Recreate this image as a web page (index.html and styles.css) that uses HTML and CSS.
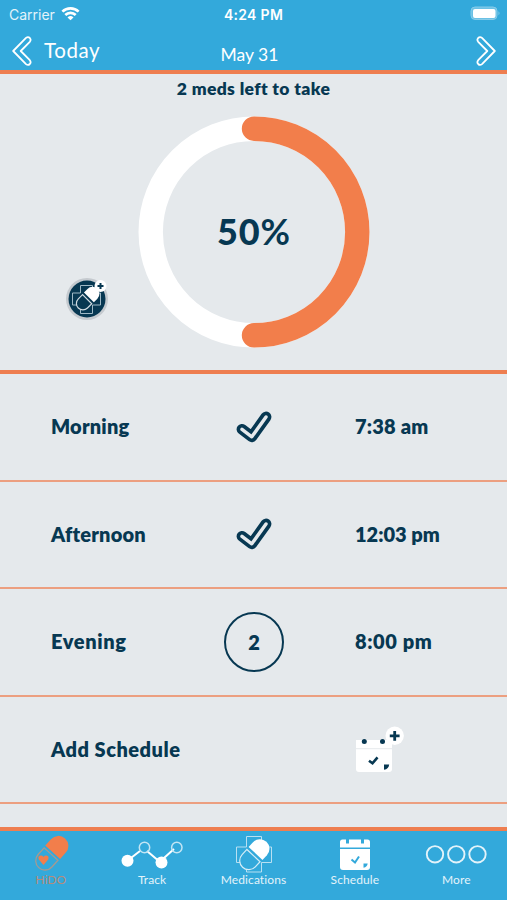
FILE: index.html
```html
<!DOCTYPE html>
<html lang="en">
<head>
    <meta charset="UTF-8">
    <meta name="viewport" content="width=device-width, initial-scale=1.0">
    <title>HiDO</title>
    <link rel="stylesheet" href="styles.css">
</head>
<body>
    <header class="header">
        <div class="status-bar">
            <div class="carrier">
                <span class="carrier-text">Carrier</span>
                <svg class="wifi" width="19" height="15" viewBox="0 0 19 15" fill="none" stroke="#fff" stroke-width="2.7">
                    <path d="M1.4 5.6a11.6 11.6 0 0 1 16.2 0"/>
                    <path d="M4.3 9a7.4 7.4 0 0 1 10.4 0"/>
                    <path d="M9.5 14.3L6.5 11.4a4.3 4.3 0 0 1 6 0z" fill="#fff" stroke="none"/>
                </svg>
            </div>
            <span class="clock">4:24 PM</span>
            <svg class="battery" width="31" height="15" viewBox="0 0 31 15">
                <rect x="1" y="1" width="26" height="12.5" rx="4" fill="#6bc1e5" stroke="#87cce9"/>
                <rect x="3" y="3" width="22.5" height="9" rx="2" fill="#fff"/>
                <path d="M28.5 5.2q2 2 0 4z" fill="#87cce9"/>
            </svg>
        </div>
        <nav class="day-nav">
            <a class="today">
                <svg width="20" height="30" viewBox="0 0 20 30" fill="none" stroke="#fff" stroke-width="1.8" stroke-linejoin="round">
                    <path d="M1.2 15L14 1.9q2.1-1.6 3.8.1q1.6 1.8 0 3.8L8.7 15l9.1 9.2q1.6 2 0 3.8q-1.7 1.7-3.8.1z"/>
                </svg>
                <span class="today-text">Today</span>
            </a>
            <span class="date">May 31</span>
            <svg class="next" width="20" height="30" viewBox="0 0 20 30" fill="none" stroke="#fff" stroke-width="1.8" stroke-linejoin="round">
                <path d="M18.8 15L6 1.9q-2.1-1.6-3.8.1q-1.6 1.8 0 3.8L11.3 15l-9.1 9.2q-1.6 2 0 3.8q1.7 1.7 3.8.1z"/>
            </svg>
        </nav>
    </header>

    <section class="progress">
        <h1 class="progress-title">2 meds left to take</h1>
        <div class="ring">
            <svg width="232" height="232" viewBox="0 0 232 232" fill="none" stroke-width="24.4">
                <circle cx="116" cy="116" r="103.3" stroke="#fff"/>
                <path d="M116 12.7a103.3 103.3 0 0 1 0 206.6" stroke="#f27e4b" stroke-linecap="round"/>
            </svg>
            <span class="percent">50<span class="sign">%</span></span>
        </div>
        <!-- add medication button -->
        <svg class="add-med" width="46" height="46" viewBox="0 0 46 46">
            <circle cx="23" cy="23" r="21" fill="#c5cacf"/>
            <circle cx="23" cy="23" r="18.5" fill="#073852"/>
            <path d="M16.5 9.5h12v7.5h8v12h-8v8.5h-12V29h-8V17h8z" fill="none" stroke="#9fb9c6" stroke-width="1"/>
            <g transform="translate(23.5 22.8) rotate(45)">
                <path d="M-7-2V-7a7 7 0 0 1 14 0v5z" fill="#fff"/>
                <path d="M-6.5 .5V6.5a6.5 6.5 0 0 0 13 0v-6z" fill="#073852" stroke="#d0dbe1" stroke-width="1.2"/>
            </g>
            <circle cx="36.5" cy="10" r="6" fill="#fff"/>
            <path d="M36.5 7v6M33.5 10h6" stroke="#073852" stroke-width="2"/>
        </svg>
    </section>

    <main class="schedule">
        <div class="row">
            <span class="label">Morning</span>
            <svg class="check" width="36" height="32" viewBox="0 0 36 32" fill="none" stroke-linecap="round" stroke-linejoin="round">
                <path d="M6 18.3L15.8 25.8L30 6" stroke="#073852" stroke-width="10.8"/>
                <path d="M6 18.3L15.8 25.8L30 6" stroke="#e5e9ec" stroke-width="3.4"/>
            </svg>
            <span class="time">7:38 am</span>
        </div>
        <div class="row">
            <span class="label">Afternoon</span>
            <svg class="check" width="36" height="32" viewBox="0 0 36 32" fill="none" stroke-linecap="round" stroke-linejoin="round">
                <path d="M6 18.3L15.8 25.8L30 6" stroke="#073852" stroke-width="10.8"/>
                <path d="M6 18.3L15.8 25.8L30 6" stroke="#e5e9ec" stroke-width="3.4"/>
            </svg>
            <span class="time noon-time">12:03 pm</span>
        </div>
        <div class="row">
            <span class="label evening">Evening</span>
            <span class="count">2</span>
            <span class="time evening-time">8:00 pm</span>
        </div>
        <div class="row">
            <span class="label add">Add Schedule</span>
            <svg class="add-schedule" width="50" height="48" viewBox="0 0 50 48">
                <path d="M1 14h36v29a3 3 0 0 1-3 3H4a3 3 0 0 1-3-3z" fill="#fff"/>
                <path d="M1 22.7h36" stroke="#e5e9ec"/>
                <circle cx="9.3" cy="15.5" r="2.5" fill="#073852"/>
                <circle cx="27.5" cy="15.5" r="2.5" fill="#073852"/>
                <path d="M14 34.7l3.5 2.6l5-6" fill="none" stroke="#073852" stroke-width="2.6"/>
                <path d="M29 38.5h5.2q-.4 4.4-5.2 5.3z" fill="#073852"/>
                <circle cx="39.7" cy="9.8" r="9.2" fill="#fff"/>
                <path d="M39.7 4.9v9.8M34.8 9.8h9.8" stroke="#073852" stroke-width="2.8"/>
            </svg>
        </div>
    </main>

    <nav class="tab-bar">
        <a class="tab active">
            <svg width="40" height="40" viewBox="0 0 40 40">
                <g transform="translate(20.7 19.3) rotate(42)">
                    <path d="M-10-1.5V-10a10 10 0 0 1 20 0v8.5z" fill="#f27e4b"/>
                    <path d="M-9.3 1V10a9.3 9.3 0 0 0 18.6 0V1z" fill="none" stroke="#a59a91" stroke-width="1.3"/>
                </g>
                <path d="M12.5 31L7.8 25.5q-1.3-3.5 1.7-3.9q2-.2 3 1.4q1-1.6 3-1.4q3 .4 1.7 3.9z" fill="#f27e4b"/>
            </svg>
            <span class="tab-text">HiDO</span>
        </a>
        <a class="tab">
            <svg width="64" height="40" viewBox="0 0 64 40">
                <path d="M7 27L20 17M27 17L37 25.5M44 24L54 15" stroke="#fff" stroke-width="2"/>
                <circle cx="7.5" cy="26.7" r="6" fill="#fff"/>
                <circle cx="24.5" cy="13.5" r="5.2" fill="none" stroke="#c3e5f4" stroke-width="1.5"/>
                <circle cx="41.5" cy="28.5" r="6" fill="#fff"/>
                <circle cx="56.8" cy="13.5" r="5.2" fill="none" stroke="#c3e5f4" stroke-width="1.5"/>
            </svg>
            <span class="tab-text">Track</span>
        </a>
        <a class="tab">
            <svg width="40" height="40" viewBox="0 0 40 40">
                <path d="M12.5 2.5h15v10.5h10v15.5h-10v9.5h-15v-9.5H2.5V13h10z" fill="none" stroke="#b9e0f2"/>
                <g transform="translate(20.5 20.5) rotate(43)">
                    <path d="M-9.5-1.5V-8a9.5 9.5 0 0 1 19 0v6.5z" fill="#fff"/>
                    <path d="M-9 1.5V8.5a9 9 0 0 0 18 0v-7z" fill="#33a9db" stroke="#d5edf7" stroke-width="1.2"/>
                </g>
            </svg>
            <span class="tab-text">Medications</span>
        </a>
        <a class="tab">
            <svg width="40" height="40" viewBox="0 0 40 40">
                <path d="M5 13.5V8q0-2.5 2.5-2.5H11v4h3v-4h12v4h3v-4h3.5Q35 5.5 35 8v5.5z" fill="#fff"/>
                <path d="M5 15h30v18q0 3-3 3H8q-3 0-3-3z" fill="#fff"/>
                <path d="M16.5 25.5l3.5 3l4-6" fill="none" stroke="#33a9db" stroke-width="2"/>
                <path d="M28.5 29.5h4.2q-.4 3.6-4.2 4.2z" fill="#33a9db"/>
            </svg>
            <span class="tab-text">Schedule</span>
        </a>
        <a class="tab">
            <svg width="62" height="40" viewBox="0 0 62 40" fill="none" stroke="#e3f3fa" stroke-width="1.9">
                <circle cx="10" cy="20.3" r="8.2"/>
                <circle cx="31.3" cy="20.3" r="8.2"/>
                <circle cx="52.5" cy="20.3" r="8.2"/>
            </svg>
            <span class="tab-text">More</span>
        </a>
    </nav>
</body>
</html>
```
FILE: styles.css
```css
* {
    box-sizing: border-box;
}

body {
    margin: 0;
    height: 900px;
    display: flex;
    flex-direction: column;
    overflow: hidden;
    background-color: #e5e9ec;
    color: #073852;
    font-family: Lato, "Open Sans", sans-serif;
}

svg {
    display: block;
    flex: none;
}

.header {
    height: 74px;
    background-color: #33a9db;
    border-bottom: 4px solid #ee7e50;
    color: white;
}

.status-bar {
    height: 28px;
    padding: 0 6px 0 9px;
    display: grid;
    grid-template-columns: 1fr auto 1fr;
    align-items: center;
    font-family: Inter, sans-serif;
    font-size: 14px;
}

.carrier {
    display: flex;
    align-items: center;
    gap: 6px;
}

.carrier-text {
    color: #e3f3fa;
}

.wifi {
    margin-top: -2px;
}

.clock {
    font-size: 14px;
    font-weight: 600;
    letter-spacing: 0.3px;
    margin-right: 3px;
}

.battery {
    justify-self: end;
    margin-top: -1px;
}

.day-nav {
    height: 42px;
    padding: 0 11px 0 12px;
    display: grid;
    grid-template-columns: 1fr auto 1fr;
    align-items: center;
}

.today {
    display: flex;
    align-items: center;
    gap: 12px;
}

.day-nav svg {
    margin-top: 3px;
}

.today-text {
    font-size: 20.5px;
    letter-spacing: 0.6px;
    margin-top: 1px;
}

.date {
    font-size: 17.5px;
    margin-top: 10px;
    margin-right: 9px;
}

.next {
    justify-self: end;
}

/* Ring section */
.progress {
    position: relative;
    height: 300px;
    display: flex;
    flex-direction: column;
    align-items: center;
    border-bottom: 4px solid #ee7e50;
}

.progress-title {
    margin: 5px 0 0;
    height: 37px;
    font-size: 17.5px;
    font-weight: 800;
    line-height: 20px;
    letter-spacing: 0.35px;
}

.ring {
    display: grid;
    place-items: center;
}

.ring > * {
    grid-area: 1 / 1;
}

.percent {
    margin-top: -3px;
    font-size: 36px;
    font-weight: 900;
    letter-spacing: 0.8px;
}

.sign {
    font-weight: bold;
    letter-spacing: 0;
}

.add-med {
    position: absolute;
    left: 64px;
    top: 202px;
}

/* Schedule rows */
.schedule {
    height: 453px;
}

.row {
    height: 107.5px;
    padding-left: 51px;
    display: grid;
    grid-template-columns: 153px 100px 51px 1fr;
    align-items: center;
    border-bottom: 2px solid #ec9f80;
    font-size: 20px;
    font-weight: 800;
    letter-spacing: 0.2px;
}

.label,
.time {
    margin-top: -1px;
}

.evening,
.evening-time {
    letter-spacing: 0.6px;
}

.add {
    letter-spacing: 0.5px;
}

.noon-time {
    letter-spacing: 0;
}

.check,
.count {
    grid-column: 2;
    justify-self: center;
}

.count {
    width: 60px;
    height: 60px;
    display: flex;
    align-items: center;
    justify-content: center;
    border: 2px solid #073852;
    border-radius: 50%;
    letter-spacing: 0;
}

.time,
.add-schedule {
    grid-column: 4;
}

.add-schedule {
    margin-top: 2px;
}

/* Bottom tabs */
.tab-bar {
    height: 73px;
    display: flex;
    background-color: #33a9db;
    border-top: 4px solid #ee7e50;
    color: #e3f3fa;
}

.tab {
    flex: 1;
    padding-top: 3px;
    display: flex;
    flex-direction: column;
    align-items: center;
}

.tab-text {
    margin-top: -2px;
    font-size: 12px;
    line-height: 16px;
    letter-spacing: 0.1px;
}

.active .tab-text {
    color: #b58c7b;
}
```
